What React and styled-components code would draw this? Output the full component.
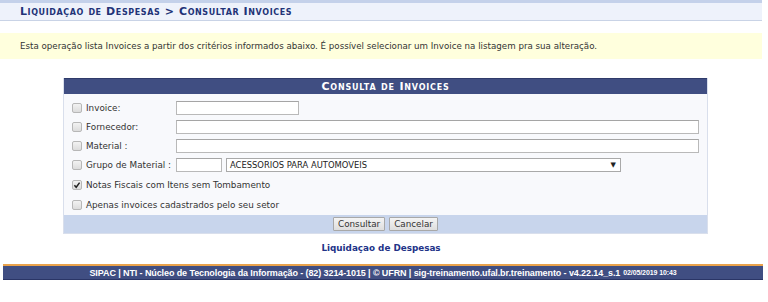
import React from 'react'
import styled, { createGlobalStyle } from 'styled-components'

const Global = createGlobalStyle`
  body {
    margin: 0;
    background: #fff;
    font-family: "DejaVu Sans", Verdana, sans-serif;
    font-size: 8.8px;
    color: #333;
  }
`

const Page = styled.div`
  width: 762px;
`

const TopStrip = styled.div`
  height: 3px;
  background: #c4d1ea;
`

const PathBar = styled.div`
  height: 17px;
  background: #eef2fb;
  border-bottom: 1px solid #c9d3e6;
  padding-left: 20px;
  display: flex;
  align-items: center;
`

const PathTitle = styled.h2`
  margin: 0;
  font-size: 11px;
  font-weight: bold;
  font-variant: small-caps;
  color: #223377;
  letter-spacing: 0.6px;
`

const Notice = styled.div`
  margin-top: 12px;
  height: 26px;
  background: #ffffdd;
  padding-left: 20px;
  display: flex;
  align-items: center;
  font-size: 8.7px;
  color: #333;
`

const Form = styled.div`
  margin: 19px 0 0 63px;
  width: 643px;
  border: 1px solid #d9dfec;
  border-top: none;
  background: #f8f9fc;
`

const Caption = styled.div`
  height: 15px;
  background: #404e82;
  border-top: 1px solid #2f3b6a;
  color: #fff;
  text-align: center;
  font-weight: bold;
  font-variant: small-caps;
  font-size: 11px;
  line-height: 15px;
  letter-spacing: 0.8px;
`

const Body = styled.div`
  padding: 4px 8px 1px 8px;
  display: flex;
  flex-direction: column;
`

const Row = styled.div`
  height: ${p => (p.$tall ? '21px' : '19px')};
  display: flex;
  align-items: center;
  gap: 4px;
`

const Check = styled.span`
  width: 8px;
  height: 8px;
  border: 1px solid #b7b7b7;
  border-radius: 2px;
  background: linear-gradient(#f2f2f2, #dcdcdc);
  position: relative;
  flex: none;
`

const Tick = styled.svg`
  position: absolute;
  left: 0;
  top: 0;
`

const Label = styled.span`
  width: ${p => (p.$wide ? 'auto' : '86px')};
  flex: none;
  color: #333;
  white-space: nowrap;
`

const Input = styled.span`
  display: block;
  height: 12px;
  width: ${p => p.$w || 'auto'};
  flex: ${p => (p.$w ? 'none' : '1')};
  background: #fff;
  border: 1px solid #b9b9b9;
  border-top-color: #a5a5a5;
`

const Select = styled.span`
  width: 386px;
  height: 12px;
  border: 1px solid #a9a9a9;
  background: #fff;
  display: flex;
  align-items: center;
  justify-content: space-between;
  padding: 0 4px 0 3px;
  font-size: 8.4px;
  color: #222;
`

const Arrow = styled.span`
  font-size: 7px;
`

const Buttons = styled.div`
  height: 18px;
  background: #c8d5ec;
  display: flex;
  justify-content: center;
  align-items: center;
  gap: 4px;
`

const Button = styled.button`
  font-family: "DejaVu Sans", Verdana, sans-serif;
  font-size: 8.8px;
  color: #333;
  height: 14px;
  padding: 0 4px;
  background: linear-gradient(#f4f4f4, #dedede);
  border: 1px solid #a8a8a8;
  border-radius: 1px;
  line-height: 11px;
`

const BackLink = styled.a`
  display: block;
  text-align: center;
  margin-top: 7px;
  font-weight: bold;
  color: #223388;
  text-decoration: none;
  height: 14px;
  line-height: 14px;
`

const Footer = styled.div`
  margin: 9px 0 0 3px;
  width: 760px;
  height: 13px;
  background: #404e82;
  border-top: 2px solid #e9a24b;
  border-bottom: 1px solid #2a3566;
  color: #fff;
  display: flex;
  justify-content: center;
  align-items: center;
  font-family: "Liberation Sans", Arial, sans-serif;
  font-size: 9px;
  font-weight: bold;
  letter-spacing: -0.1px;
`

const Stamp = styled.span`
  font-size: 7px;
  margin-left: 3px;
`

const Box = ({ checked }) => (
  <Check>
    {checked && (
      <Tick width="8" height="8" viewBox="0 0 8 8">
        <path d="M1.4 4.2 L3.2 6.2 L6.6 1.6" stroke="#222" strokeWidth="1.5" fill="none" />
      </Tick>
    )}
  </Check>
)

const App = () => (
  <Page>
    <Global />
    <TopStrip />
    <PathBar>
      <PathTitle>Liquidaçao de Despesas &gt; Consultar Invoices</PathTitle>
    </PathBar>
    <Notice>
      Esta operação lista Invoices a partir dos critérios informados abaixo. É possível selecionar um Invoice na listagem pra sua alteração.
    </Notice>

    <Form>
      <Caption>Consulta de Invoices</Caption>
      <Body>
        <Row>
          <Box />
          <Label>Invoice:</Label>
          <Input $w="121px" />
        </Row>
        <Row>
          <Box />
          <Label>Fornecedor:</Label>
          <Input />
        </Row>
        <Row>
          <Box />
          <Label>Material :</Label>
          <Input />
        </Row>
        <Row>
          <Box />
          <Label>Grupo de Material :</Label>
          <Input $w="44px" />
          <Select>
            <span>ACESSORIOS PARA AUTOMOVEIS</span>
            <Arrow>▼</Arrow>
          </Select>
        </Row>
        <Row $tall>
          <Box checked />
          <Label $wide>Notas Fiscais com Itens sem Tombamento</Label>
        </Row>
        <Row>
          <Box />
          <Label $wide>Apenas invoices cadastrados pelo seu setor</Label>
        </Row>
      </Body>
      <Buttons>
        <Button>Consultar</Button>
        <Button>Cancelar</Button>
      </Buttons>
    </Form>

    <BackLink href="#">Liquidaçao de Despesas</BackLink>

    <Footer>
      SIPAC | NTI - Núcleo de Tecnologia da Informação - (82) 3214-1015 | © UFRN | sig-treinamento.ufal.br.treinamento - v4.22.14_s.1
      <Stamp>02/05/2019 10:43</Stamp>
    </Footer>
  </Page>
)

export default App
